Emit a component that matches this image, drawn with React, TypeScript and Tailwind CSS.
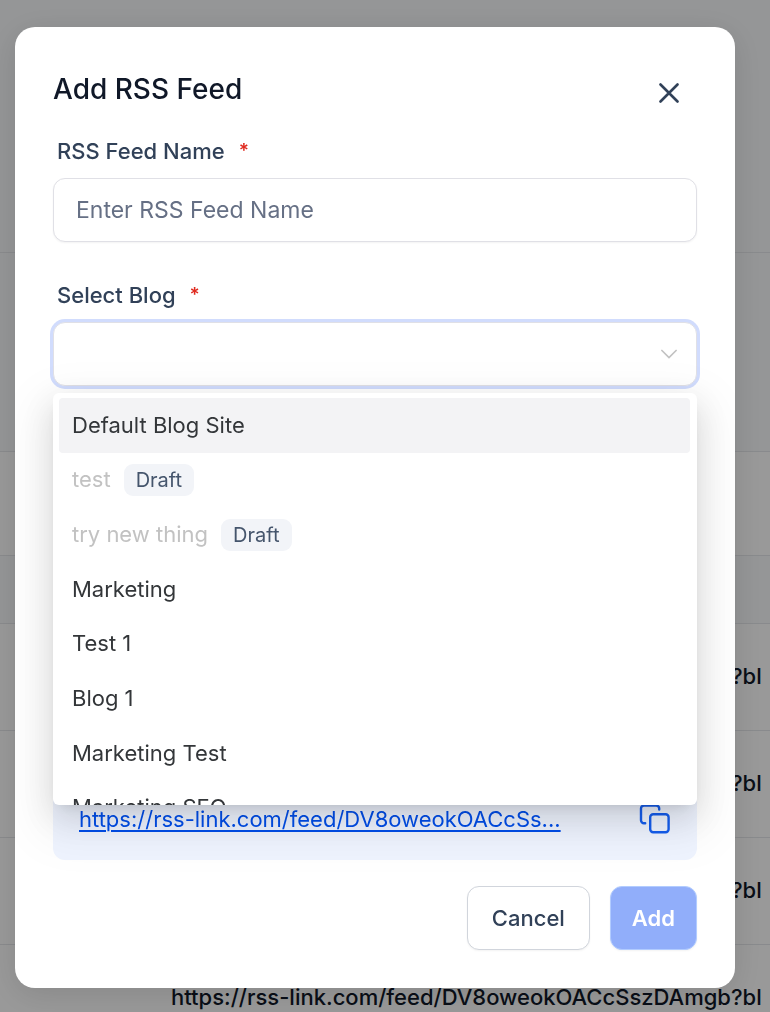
import { useState } from "react";

const blogs = [
  { name: "Default Blog Site", draft: false },
  { name: "test", draft: true },
  { name: "try new thing", draft: true },
  { name: "Marketing", draft: false },
  { name: "Test 1", draft: false },
  { name: "Blog 1", draft: false },
  { name: "Marketing Test", draft: false },
  { name: "Marketing SEO", draft: false },
];

const feeds = [1, 2, 3, 4];
const feedUrl = "https://rss-link.com/feed/DV8oweokOACcSszDAmgb?bl";

function FeedPage() {
  return (
    <div className="h-screen overflow-hidden bg-white text-[22px] font-medium text-gray-900">
      <div className="h-[253px] border-b border-gray-200 bg-slate-50" />
      <div className="h-[199px] border-b border-gray-200 bg-slate-50" />
      <div className="h-[104px] border-b border-gray-200" />
      <table className="w-full table-fixed border-collapse">
        <thead>
          <tr className="h-[67px] border-b border-gray-200 bg-slate-50">
            <th className="w-[171px]" aria-label="Name" />
            <th aria-label="Link" />
          </tr>
        </thead>
        <tbody>
          {feeds.map((id) => (
            <tr key={id} className="h-[107px] border-b border-gray-200">
              <td />
              <td className="overflow-hidden whitespace-nowrap">{feedUrl}</td>
            </tr>
          ))}
        </tbody>
      </table>
    </div>
  );
}

function FieldLabel({ htmlFor, children }: { htmlFor: string; children: string }) {
  return (
    <label htmlFor={htmlFor} className="flex gap-[14px] px-1 text-[22px] leading-8 font-medium text-slate-700">
      {children}
      <span className="text-[19px] font-semibold text-[#e02b20]">*</span>
    </label>
  );
}

function CloseIcon() {
  return (
    <svg width="20" height="20" viewBox="0 0 20 20" fill="none" stroke="currentColor" strokeWidth="2.6" strokeLinecap="round" aria-hidden="true">
      <path d="M1.5 1.5l17 17M18.5 1.5l-17 17" />
    </svg>
  );
}

function CopyIcon() {
  return (
    <svg width="32" height="32" viewBox="0 0 32 32" fill="none" stroke="currentColor" strokeWidth="2.4" strokeLinecap="round" strokeLinejoin="round" aria-hidden="true">
      <rect x="11.2" y="11.2" width="18.4" height="18" rx="3" />
      <path d="M6.2 20.2H5a3 3 0 0 1-3-3V5.500a3 3 0 0 1 3-3h12.200a3 3 0 0 1 3 3v1" />
    </svg>
  );
}

function BlogList({ active, onPick }: { active: string; onPick: (name: string) => void }) {
  return (
    <div className="absolute inset-x-0 top-full z-10 mt-[7px] h-[412px] overflow-hidden rounded-md bg-white py-[5px] pr-[7px] pl-[6px] text-[22px] text-[#333639] shadow-[0_6px_12px_-8px_rgba(0,0,0,0.16),0_12px_32px_0_rgba(0,0,0,0.12),0_18px_48px_16px_rgba(0,0,0,0.05)]">
      <ul role="listbox" aria-label="Blogs" className="grid h-[437px] auto-rows-fr">
        {blogs.map((blog) => (
          <li
            key={blog.name}
            role="option"
            aria-selected={blog.name === active}
            aria-disabled={blog.draft}
            onClick={() => !blog.draft && onPick(blog.name)}
            className={
              blog.name === active
                ? "flex items-center gap-[13px] rounded bg-[#f3f3f5] px-[13px]"
                : "flex items-center gap-[13px] rounded px-[13px]"
            }
          >
            <span className={blog.draft ? "text-[#c2c2c2]" : ""}>{blog.name}</span>
            {blog.draft && (
              <span className="rounded-[9px] bg-[#f2f4f8] px-3 text-[20px] leading-8 text-slate-600">Draft</span>
            )}
          </li>
        ))}
      </ul>
    </div>
  );
}

export default function App() {
  const [name, setName] = useState("");
  const [blog, setBlog] = useState("");
  const [active, setActive] = useState("Default Blog Site");

  return (
    <div className="font-['Inter',sans-serif]">
      <FeedPage />
      <div className="fixed inset-0 flex overflow-hidden bg-black/40 pt-[27px] pr-[35px] pb-6 pl-[15px]">
        <form
          role="dialog"
          aria-labelledby="dialog-title"
          onSubmit={(e) => e.preventDefault()}
          className="flex w-full flex-col rounded-[20px] bg-white px-[38px] pt-11 pb-[38px] shadow-[0_6px_32px_0_rgba(0,0,0,0.12)]"
        >
          <header className="flex items-start justify-between pr-[18px]">
            <h1 id="dialog-title" className="text-[28px] leading-9 font-medium text-gray-900">
              Add RSS Feed
            </h1>
            <button type="button" aria-label="Close" className="mt-3 text-slate-700">
              <CloseIcon />
            </button>
          </header>

          <div className="mt-7 flex flex-col gap-[11px]">
            <FieldLabel htmlFor="feed-name">RSS Feed Name</FieldLabel>
            <input
              id="feed-name"
              value={name}
              onChange={(e) => setName(e.target.value)}
              placeholder="Enter RSS Feed Name"
              className="h-16 w-full rounded-xl border border-[#e0e0e6] bg-white px-[22px] text-[23px] text-slate-700 shadow-xs outline-none placeholder:text-[#667085]"
            />
          </div>

          <div className="mt-[37px] flex flex-col gap-[11px]">
            <FieldLabel htmlFor="blog">Select Blog</FieldLabel>
            <div className="relative">
              <select
                id="blog"
                value={blog}
                onChange={(e) => setBlog(e.target.value)}
                className="block h-16 w-full appearance-none rounded-xl border border-[#e0e0e6] bg-white px-[22px] text-[22px] ring-3 ring-[#d1dcfd] outline-none"
              >
                <option value="" />
                {blogs.map((b) => (
                  <option key={b.name} disabled={b.draft}>
                    {b.name}
                  </option>
                ))}
              </select>
              <svg className="pointer-events-none absolute top-6 right-5" width="16" height="16" viewBox="0 0 16 16" fill="none" stroke="#c2c2c2" strokeWidth="1.7" strokeLinecap="round" aria-hidden="true">
                <path d="M0.9 4.5L8 11.5L15.1 4.5" />
              </svg>
              <BlogList active={active} onPick={setActive} />
            </div>
          </div>

          <div className="mt-auto flex items-end justify-between rounded-xl bg-[#eff4ff] px-[26px] pt-10 pb-[25px]">
            <a href="#feed" className="min-w-0 truncate text-[22px] leading-8 text-[#004eeb] underline decoration-2 underline-offset-3">
              https://rss-link.com/feed/DV8oweokOACcSs...
            </a>
            <button type="button" aria-label="Copy link" className="text-[#155eef]">
              <CopyIcon />
            </button>
          </div>

          <footer className="mt-[26px] flex justify-end gap-5">
            <button type="button" className="h-16 rounded-xl border border-gray-300 bg-white px-6 text-[22px] font-medium text-slate-700 shadow-xs">
              Cancel
            </button>
            <button type="submit" className="h-16 rounded-xl border border-[#b2ccff] bg-[#91aefa] px-[21px] text-[22px] font-semibold text-white shadow-xs">
              Add
            </button>
          </footer>
        </form>
      </div>
    </div>
  );
}
